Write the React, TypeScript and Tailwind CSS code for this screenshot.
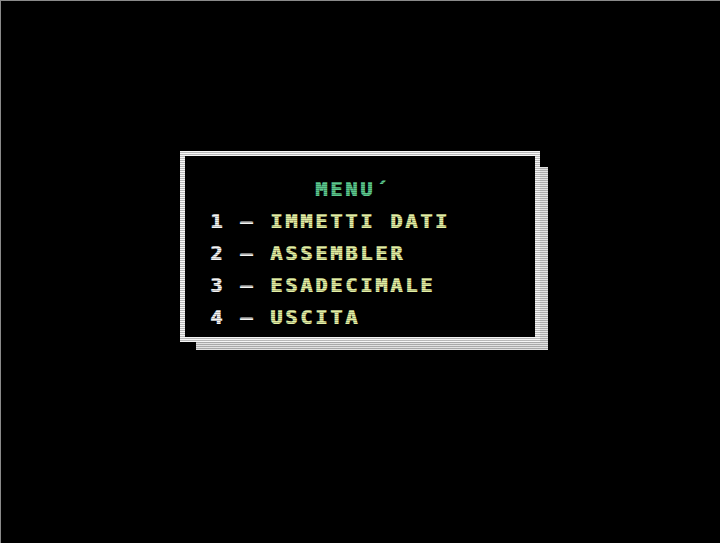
const rows = [
  { n: '1', label: 'IMMETTI DATI' },
  { n: '2', label: 'ASSEMBLER' },
  { n: '3', label: 'ESADECIMALE' },
  { n: '4', label: 'USCITA' },
];

export default function App() {
  return (
    <div className="relative w-[720px] h-[543px] bg-black overflow-hidden border-t border-l border-[#8a8a8a]">
      <div className="pt-[150px] pl-[179px]">
        <div
          className="w-[360px] h-[191px] border-[5px] border-[#f6f6f6] bg-black shadow-[12px_12px_0_-4px_#e2e2e2] pt-[17px] pl-[25px] font-['DejaVu_Sans_Mono',monospace] font-bold text-[20px] leading-[32px] tracking-[2.95px] whitespace-pre [text-shadow:1px_0_0_currentColor]"
        >
          <div className="text-[#5cc98e]">{'       MENU´'}</div>
          {rows.map((r) => (
            <div key={r.n} className="flex">
              <span className="text-[#f4f4f4]">{r.n + ' – '}</span>
              <span className="text-[#e4f0a4]">{r.label}</span>
            </div>
          ))}
        </div>
      </div>
      <div className="absolute inset-0 pointer-events-none bg-[repeating-linear-gradient(to_bottom,transparent_0px,transparent_1px,rgba(0,0,0,0.25)_1px,rgba(0,0,0,0.25)_2px)]" />
    </div>
  );
}
